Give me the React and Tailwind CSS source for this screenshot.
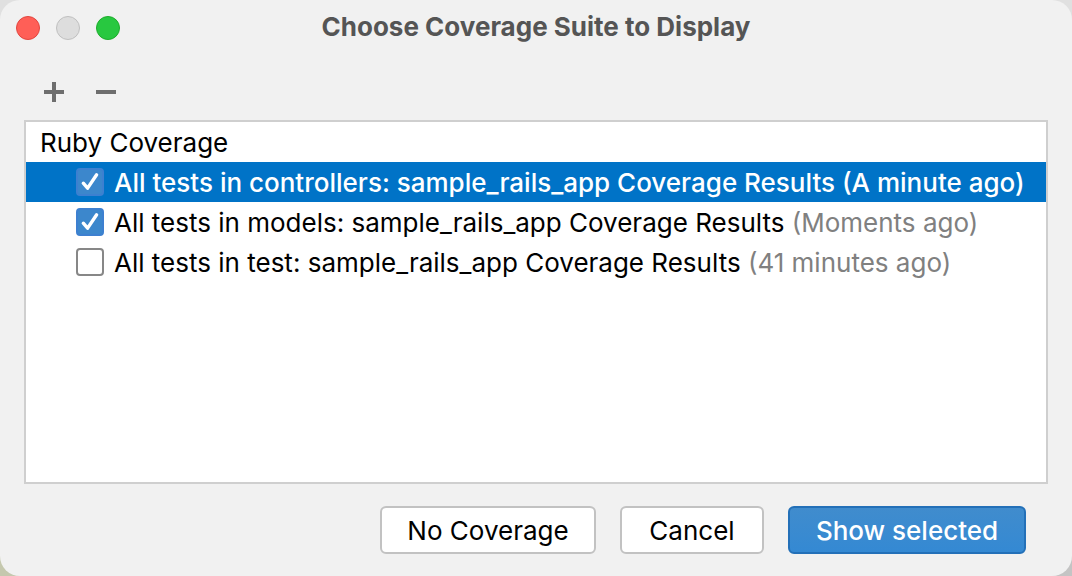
import { useState } from "react";

const initialSuites = [
  { id: 1, name: "All tests in controllers: sample_rails_app Coverage Results", time: "(A minute ago)", checked: true },
  { id: 2, name: "All tests in models: sample_rails_app Coverage Results", time: "(Moments ago)", checked: true },
  { id: 3, name: "All tests in test: sample_rails_app Coverage Results", time: "(41 minutes ago)", checked: false },
];

function SuiteRow({ suite, selected, onSelect, onToggle }) {
  return (
    <li
      onClick={onSelect}
      className={
        selected
          ? "flex h-10 items-center gap-2.5 bg-[#0073c7] pl-[50px] font-medium text-white"
          : "flex h-10 items-center gap-2.5 pl-[50px] text-black"
      }
    >
      <span className="grid size-7 shrink-0">
        <input
          id={`suite-${suite.id}`}
          type="checkbox"
          checked={suite.checked}
          onChange={onToggle}
          className="col-start-1 row-start-1 size-7 appearance-none rounded border-2 border-[#878787] bg-white checked:border-[#3d80d0] checked:bg-[#3c87cc]"
        />
        {suite.checked && (
          <svg viewBox="0 0 28 28" className="pointer-events-none col-start-1 row-start-1 size-7" fill="none">
            <path d="M7.3 15.2 11.6 20.1 20.6 6.8" stroke="#fff" strokeWidth="3.4" strokeLinecap="round" strokeLinejoin="round" />
          </svg>
        )}
      </span>
      <label htmlFor={`suite-${suite.id}`} className="pt-0.5 whitespace-pre">
        {suite.name} <span className={selected ? "text-white" : "text-[#808080]"}>{suite.time}</span>
      </label>
    </li>
  );
}

function App() {
  const [suites, setSuites] = useState(initialSuites);
  const [selected, setSelected] = useState(1);

  const toggle = (id) =>
    setSuites(suites.map((s) => (s.id === id ? { ...s, checked: !s.checked } : s)));

  return (
    <div className="min-h-screen bg-[linear-gradient(to_bottom,#e0e0e0_50%,transparent_50%),linear-gradient(to_right,#c5c8ae,#c4c4c4)] font-['Inter','Liberation_Sans',sans-serif] text-[26px] leading-10">
      <div className="flex min-h-screen flex-col rounded-[20px] bg-[#f1f1f1]">
        {/* Title bar */}
        <header className="grid h-14 grid-cols-[1fr_auto_1fr] items-center px-4">
          <div className="flex gap-4">
            <button aria-label="Close" className="size-6 rounded-full border border-[#e2463f] bg-[#ff5f57]" />
            <button aria-label="Minimize" disabled className="size-6 rounded-full border border-[#c0c0c0] bg-[#dddddd]" />
            <button aria-label="Zoom" className="size-6 rounded-full border border-[#1dad2b] bg-[#28c840]" />
          </div>
          <h1 className="pb-0.5 font-bold text-[#555555]">Choose Coverage Suite to Display</h1>
        </header>

        {/* Toolbar */}
        <div className="flex h-16 items-center gap-3 px-[34px] pt-2">
          <button aria-label="Add" className="flex size-10 items-center justify-center">
            <svg viewBox="0 0 20 20" className="size-5" fill="#6e6e6e">
              <path d="M8 0h4v8h8v4h-8v8H8v-8H0V8h8z" />
            </svg>
          </button>
          <button
            aria-label="Remove"
            onClick={() => setSuites(suites.filter((s) => s.id !== selected))}
            className="flex size-10 items-center justify-center"
          >
            <svg viewBox="0 0 20 20" className="size-5" fill="#6e6e6e">
              <path d="M0 8h20v4H0z" />
            </svg>
          </button>
        </div>

        <main className="mx-6 flex-1 overflow-hidden border-2 border-[#cfcfcf] bg-white">
          <h2 className="flex h-10 items-center pt-0.5 pl-3.5">Ruby Coverage</h2>
          <ul>
            {suites.map((s) => (
              <SuiteRow
                key={s.id}
                suite={s}
                selected={s.id === selected}
                onSelect={() => setSelected(s.id)}
                onToggle={() => toggle(s.id)}
              />
            ))}
          </ul>
        </main>

        <footer className="flex justify-end gap-6 px-[46px] py-[22px]">
          <button className="flex h-12 w-54 items-center justify-center rounded-md border-2 border-[#c2c2c2] bg-white pt-0.5 text-black">
            No Coverage
          </button>
          <button className="flex h-12 w-36 items-center justify-center rounded-md border-2 border-[#c2c2c2] bg-white pt-0.5 text-black">
            Cancel
          </button>
          <button className="flex h-12 w-[238px] items-center justify-center rounded-md border-2 border-[#2370b8] bg-linear-to-b from-[#408ccd] to-[#3489d3] pt-0.5 font-medium text-white">
            Show selected
          </button>
        </footer>
      </div>
    </div>
  );
}

export default App;
